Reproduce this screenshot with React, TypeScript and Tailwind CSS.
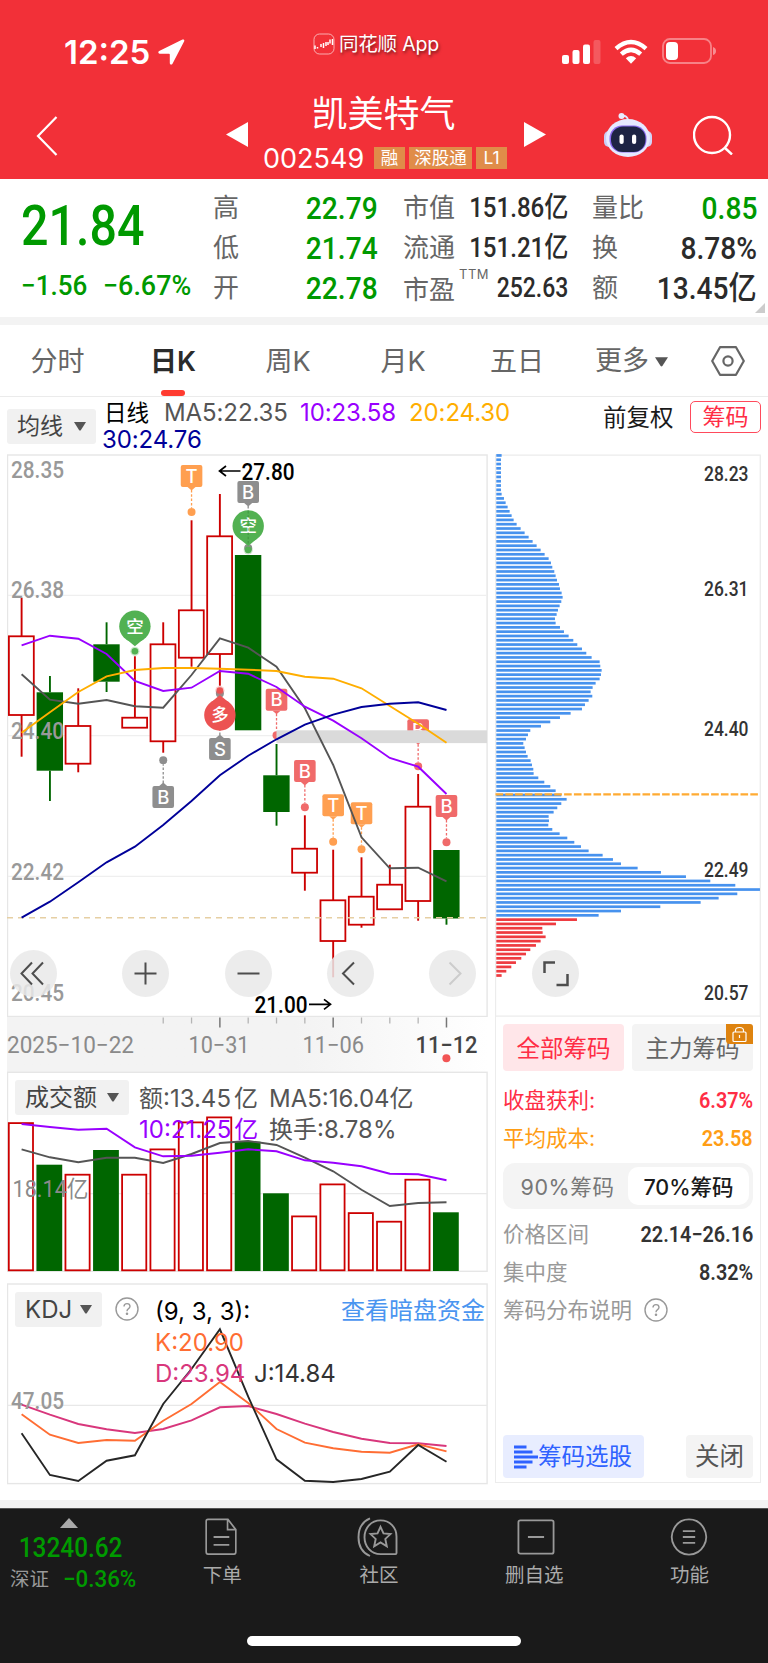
import type { ReactNode } from "react";
import { clsx } from "clsx";

const STEP = 28.325;
const cx = (i: number) => 21.6 + i * STEP;
const line = (ys: number[]) => ys.map((y, i) => `${cx(i).toFixed(1)},${y}`).join(" ");

// [up, high, bodyTop, bodyBottom, low]
const candles: [boolean, number, number, number, number][] = [
  [true, 597.7, 636.3, 715, 756.7],
  [false, 676, 692.3, 770.7, 801],
  [true, 688.3, 726, 763.7, 772.3],
  [false, 622.3, 644.3, 681.7, 692],
  [true, 656.3, 717.7, 727.7, 727.7],
  [true, 622.3, 644.3, 741.3, 752.7],
  [true, 520.3, 610.3, 657.7, 666.7],
  [true, 494, 536.3, 654, 685.7],
  [false, 555, 555, 730.3, 730.3],
  [false, 744, 775.3, 812, 825.7],
  [true, 815.3, 848.7, 872.7, 890.7],
  [true, 849.7, 900.3, 941, 977.3],
  [true, 857.3, 896.7, 924.7, 927.7],
  [true, 864.7, 884.7, 909.3, 909.3],
  [true, 774, 806.7, 901, 920.7],
  [false, 850, 850, 918.5, 924.7],
];

const ma5 = [674.3, 699.7, 703.7, 700, 706.3, 707.7, 675, 638.3, 647.7, 666.7, 708.3, 765, 837.3, 868.3, 867.7, 881.3];
const ma10 = [645.3, 635.7, 638.7, 654, 681, 691, 687.7, 671, 673.7, 687, 706.7, 720.7, 738.3, 758, 766.7, 794];
const ma20 = [732.7, 712.3, 692, 676.3, 670, 668, 668, 668.7, 669.7, 671, 676.7, 678.7, 688.3, 706, 723.7, 742.7];
const ma30 = [917.7, 901.7, 882.3, 862.3, 846.7, 825, 801, 775.3, 755.7, 739.3, 724.7, 714.7, 707, 703.7, 702.3, 710];

const volumes: [boolean, number][] = [
  [true, 1122.7], [false, 1164.7], [true, 1174.3], [false, 1150], [true, 1174.3], [true, 1149], [true, 1122], [true, 1117],
  [false, 1141.7], [false, 1193.3], [true, 1216], [true, 1184], [true, 1212.7], [true, 1221.3], [true, 1179.3], [false, 1212.3],
];
const vol5 = [1149.3, 1157.3, 1162.3, 1157.7, 1157.7, 1163, 1154, 1143, 1141, 1145, 1157.7, 1171.3, 1189.7, 1206, 1203, 1202.3];
const vol10 = [1124, 1127, 1129.7, 1128.7, 1147.3, 1156.3, 1155.7, 1152.7, 1149.3, 1151.3, 1160.3, 1162.7, 1166.3, 1173.7, 1174.3, 1180.3];

const kdjK = [1414.3, 1434.7, 1443, 1440, 1440.7, 1420.7, 1404, 1382, 1403, 1429, 1442.7, 1448.3, 1451.7, 1452.7, 1444.3, 1451.3];
const kdjD = [1404.7, 1414.7, 1424, 1429.3, 1433, 1429, 1420.3, 1407.3, 1406, 1414, 1423.7, 1432, 1438.7, 1443, 1443.3, 1446];
const kdjJ = [1433.3, 1475, 1481, 1460.7, 1455.3, 1404, 1369, 1329.3, 1396.7, 1459.3, 1480.7, 1482, 1479, 1471.7, 1445, 1461.7];

// chip distribution, one length per price level, top to bottom
const chips = [
  16, 14, 14, 14, 14, 14, 14, 14, 14, 16, 23, 28, 34, 40, 46, 52, 61, 73, 85, 97, 109, 121, 133, 145, 157, 164, 168, 174,
  178, 182, 188, 191, 196, 199, 195, 190, 185, 181, 176, 178, 191, 203, 217, 231, 243, 257, 270, 286, 310, 312, 316, 314,
  310, 298, 289, 283, 288, 277, 266, 257, 223, 191, 162, 134, 102, 95, 89, 81, 85, 89, 94, 103, 107, 111, 112, 126, 144,
  162, 178, 195, 211, 195, 183, 172, 157, 158, 156, 168, 190, 213, 234, 254, 277, 319, 350, 374, 424, 494, 569, 642, 717,
  791, 723, 667, 613, 492, 374, 307, 242, 179, 138, 139, 148, 133, 119, 102, 89, 75, 59, 45, 30, 16,
];
const PROFIT_FROM = 108;

const RED = "#cc0000";
const GREEN = "#006600";

function Num({ x, y, w, size = 23, fill = "#999999", weight = 500, children }: {
  x: number; y: number; w: number; size?: number; fill?: string; weight?: number; children: string;
}) {
  return (
    <text x={x} y={y} fontSize={size} fill={fill} fontWeight={weight} textLength={w} lengthAdjust="spacingAndGlyphs" className="font-['Roboto','Noto_Sans_CJK_SC',sans-serif]">
      {children}
    </text>
  );
}

function Flag({ i, y, label, color, dot, up = false }: { i: number; y: number; label: string; color: string; dot: number; up?: boolean }) {
  const x = cx(i);
  const tip = up ? y - 3 : y + 25;
  return (
    <g>
      <line x1={x} x2={x} y1={tip} y2={up ? dot + 4 : dot - 4} stroke={color} strokeWidth="1.3" strokeDasharray="2.5 1.8" />
      <rect x={x - 10.8} y={y} width="21.6" height="22" rx="2" fill={color} />
      <path d={up ? `M${x - 4} ${y}L${x} ${y - 3.5}L${x + 4} ${y}z` : `M${x - 4} ${y + 22}L${x} ${y + 25.5}L${x + 4} ${y + 22}z`} fill={color} />
      <text x={x} y={y + 17.5} fontSize="18.5" fontWeight="500" fill="#fff" textAnchor="middle">{label}</text>
      <circle cx={x} cy={dot} r="4" fill={color} />
    </g>
  );
}

function Balloon({ i, y, label, color, dot, up = false }: { i: number; y: number; label: string; color: string; dot: number; up?: boolean }) {
  const x = cx(i);
  const s = up ? -1 : 1;
  return (
    <g>
      <circle cx={x} cy={dot} r="4.6" fill={color} opacity="0.3" />
      <circle cx={x} cy={dot} r="3.3" fill={color} />
      <circle cx={x} cy={y} r="15.7" fill={color} />
      <path d={`M${x - 9} ${y + s * 12.5}L${x} ${y + s * 20}L${x + 9} ${y + s * 12.5}z`} fill={color} />
      <text x={x} y={y + 6.3} fontSize="17.5" fontWeight="500" fill="#fff" textAnchor="middle">{label}</text>
    </g>
  );
}

function Poly({ ys, color }: { ys: number[]; color: string }) {
  return <polyline points={line(ys)} fill="none" stroke={color} strokeWidth="1.9" />;
}

function CandleChart() {
  return (
    <svg viewBox="7 454 481 563" className="block h-[563px] w-[481px]">
      <rect x="7.5" y="455" width="479.6" height="561.5" fill="#fff" stroke="#e6e6e6" strokeWidth="1.4" />
      {[595.3, 735.7, 876.3].map((y) => (
        <line key={y} x1="8" x2="487" y1={y} y2={y} stroke="#efefef" strokeWidth="1.3" />
      ))}
      {candles.map(([up, high, top, bottom, low], i) => (
        <g key={i} stroke={up ? RED : GREEN} strokeWidth="1.9">
          <line x1={cx(i)} x2={cx(i)} y1={high} y2={top} />
          <line x1={cx(i)} x2={cx(i)} y1={bottom} y2={low} />
          {up ? (
            <rect x={cx(i) - 12.7} y={top} width="24.9" height={bottom - top} fill="#fff" strokeWidth="1.8" />
          ) : (
            <rect x={cx(i) - 13.3} y={top} width="26.4" height={bottom - top} fill={GREEN} stroke="none" />
          )}
        </g>
      ))}
      <Flag i={6} y={465} label="T" color="#ff9f50" dot={512} />
      <Flag i={8} y={481} label="B" color="#8e8e8e" dot={548} />
      <Balloon i={8} y={526} label="空" color="#52b152" dot={550} />
      <line x1={cx(8)} x2={cx(8)} y1="511" y2="545" stroke="#3a8a3a" strokeWidth="1.2" strokeDasharray="2.5 1.8" opacity="0.6" />
      <Balloon i={4} y={626.3} label="空" color="#52b152" dot={651.3} />
      <Flag i={7} y={738} label="S" color="#8e8e8e" dot={693.5} up />
      <Balloon i={7} y={715} label="多" color="#ec5252" dot={690.5} up />
      <Flag i={5} y={786} label="B" color="#8e8e8e" dot={760.3} up />
      <Flag i={9} y={688.7} label="B" color="#f06a6a" dot={735.3} />
      <Flag i={10} y={760} label="B" color="#f06a6a" dot={807.3} />
      <Flag i={11} y={794.3} label="T" color="#ff9f50" dot={841.7} />
      <Flag i={12} y={802.3} label="T" color="#ff9f50" dot={849.3} />
      <Flag i={14} y={719.3} label="B" color="#f06a6a" dot={766.3} />
      <Flag i={15} y={795} label="B" color="#f06a6a" dot={842.3} />
      <rect x="276.5" y="730.3" width="210.5" height="12.8" fill="#dadada" />
      <Num x={11} y={477.8} w={53}>28.35</Num>
      <Num x={11} y={598.3} w={53}>26.38</Num>
      <Num x={11} y={739.2} w={53}>24.40</Num>
      <Num x={11} y={879.8} w={53}>22.42</Num>
      <Num x={11} y={1000.5} w={53}>20.45</Num>
      <line x1="7" x2="487" y1="917.8" y2="917.8" stroke="#e6cfa3" strokeWidth="1.5" strokeDasharray="6 5" />
      <Poly ys={ma5} color="#555555" />
      <Poly ys={ma10} color="#9900ff" />
      <Poly ys={ma20} color="#ffae00" />
      <Poly ys={ma30} color="#000099" />
      <g fill="none" stroke="#000" strokeWidth="1.7">
        <path d="M240.5 471H219.5M226 466L219.5 471L226 476" />
        <path d="M309 1004.3H330.5M324 999.3L330.5 1004.3L324 1009.3" />
      </g>
      <Num x={241.5} y={479.6} w={53} fill="#000">27.80</Num>
      <Num x={254.5} y={1012.6} w={53} fill="#000">21.00</Num>
    </svg>
  );
}

function RoundButton({ children, className }: { children: ReactNode; className?: string }) {
  return (
    <button className={clsx("size-[47px] shrink-0 rounded-full bg-[#e9e9e9]/85", className)}>
      <svg viewBox="0 0 47 47" fill="none" stroke="#4d4d4d" strokeWidth="2" className="size-full">{children}</svg>
    </button>
  );
}

function DateAxis() {
  return (
    <svg viewBox="7 1016 481 55" className="block h-[55px] w-[481px] bg-linear-to-r from-[#f3f3f3] from-60% to-white">
      {[5, 6, 8, 9, 10, 12, 13, 14].map((i) => (
        <line key={i} x1={cx(i)} x2={cx(i)} y1="1016.5" y2="1022.5" stroke="#b5b5b5" strokeWidth="1.3" />
      ))}
      {[7, 11, 15].map((i) => (
        <line key={i} x1={cx(i)} x2={cx(i)} y1="1016.5" y2="1026.5" stroke="#777" strokeWidth="1.5" />
      ))}
      <Num x={7} y={1051.5} w={127} weight={400} fill="#8a8a8a">2025−10−22</Num>
      <Num x={188.500} y={1051.500} w={61} weight={400} fill="#8a8a8a">10−31</Num>
      <Num x={302.500} y={1051.500} w={61.500} weight={400} fill="#8a8a8a">11−06</Num>
      <Num x={415.500} y={1051.500} w={62} fill="#444">11−12</Num>
      <circle cx="446.4" cy="1057.3" r="4" fill="#f25555" />
    </svg>
  );
}

function VolumeChart() {
  return (
    <svg viewBox="7 1071 481 201" className="block h-[201px] w-[481px] [grid-area:1/1]">
      <rect x="7.5" y="1072.3" width="479.6" height="199" fill="#fff" stroke="#e6e6e6" strokeWidth="1.4" />
      <line x1="8" x2="487" y1="1193.7" y2="1193.7" stroke="#e8e8e8" strokeWidth="1.3" />
      {volumes.map(([up, top], i) =>
        up ? (
          <rect key={i} x={cx(i) - 12.8} y={top + 0.4} width="24.2" height={1269.9 - top} fill="#fff" stroke={RED} strokeWidth="1.8" />
        ) : (
          <rect key={i} x={cx(i) - 13.5} y={top} width="25.8" height={1271 - top} fill={GREEN} />
        )
      )}
      <Poly ys={vol5} color="#555555" />
      <Poly ys={vol10} color="#9900ff" />
      <Num x={12.5} y={1197} w={76} weight={400} fill="#8a8a8a">18.14亿</Num>
    </svg>
  );
}

function KdjChart() {
  return (
    <svg viewBox="7 1283 481 202" className="block h-[202px] w-[481px] [grid-area:1/1]">
      <rect x="7.5" y="1284" width="479.6" height="199.6" fill="#fff" stroke="#e6e6e6" strokeWidth="1.4" />
      <line x1="8" x2="487" y1="1405.3" y2="1405.3" stroke="#e8e8e8" strokeWidth="1.3" />
      <Poly ys={kdjD} color="#d8377c" />
      <Poly ys={kdjK} color="#ff6d33" />
      <Poly ys={kdjJ} color="#262626" />
      <Num x={11} y={1408.6} w={53}>47.05</Num>
    </svg>
  );
}

function ChipChart() {
  return (
    <svg viewBox="495 454 266 563" className="block h-[563px] w-[266px]">
      <path d="M495.5 1017V455.2H760.3V1017" fill="none" stroke="#ececec" strokeWidth="1.3" />
      <line x1="496" x2="760" y1="1016.2" y2="1016.2" stroke="#ececec" strokeWidth="1.3" />
      {chips.map((w, k) => (
        <rect key={k} x="496.3" y={454.1 + k * 4.298} width={w / 3} height="2.7" fill={k < PROFIT_FROM ? "#4792ee" : "#ee3b40"} />
      ))}
      <line x1="495.5" x2="759" y1="794.4" y2="794.4" stroke="#ffab33" strokeWidth="2.4" strokeDasharray="7.6 2.2" />
      <Num x={704} y={480.5} w={44.5} size={20} fill="#333">28.23</Num>
      <Num x={704} y={595.5} w={44.5} size={20} fill="#333">26.31</Num>
      <Num x={704} y={736.2} w={44.5} size={20} fill="#333">24.40</Num>
      <Num x={704} y={876.6} w={44.5} size={20} fill="#333">22.49</Num>
      <Num x={704} y={999.5} w={44.5} size={20} fill="#333">20.57</Num>
    </svg>
  );
}

function Caret({ className }: { className?: string }) {
  return (
    <svg viewBox="0 0 12 9" className={clsx("h-[9px] w-3 fill-[#555]", className)}>
      <path d="M0 0h12L6.8 8.2q-.8.8-1.6 0z" />
    </svg>
  );
}

function Dropdown({ label, className }: { label: string; className?: string }) {
  return (
    <button className={clsx("flex h-[35px] items-center justify-between rounded-[3px] bg-[#f1f1f1] pr-[10px] pl-[10px] text-[#444]", className)}>
      <span>{label}</span>
      <Caret />
    </button>
  );
}

function Help() {
  return (
    <svg viewBox="0 0 24 24" fill="none" stroke="#999" strokeWidth="1.4" className="size-6 shrink-0">
      <circle cx="12" cy="12" r="11" />
      <path d="M9 9.6q.1-3 3-3t3 2.7q0 1.5-1.700 2.500-1.300.8-1.300 2.500" />
      <circle cx="12" cy="16.8" r=".6" fill="#999" />
    </svg>
  );
}

function StatusBar() {
  return (
    <div className="flex h-[90px] items-start">
      <div className="flex w-[313px] items-center pt-8 pl-[64px]">
        <span className="w-[94px] text-[33px] leading-[40px] font-semibold">12:25</span>
        <svg viewBox="0 0 27 26" className="h-[26px] w-[27px]" fill="#fff">
          <path d="M24.5.6 1.2 12C-.2 12.700.2 14.700 1.700 14.700h9.300c.5 0 .8.3.8.8v8.500c0 1.700 2 2.100 2.700.7L26.200 2.300C26.700 1 25.700.1 24.500.6z" />
        </svg>
      </div>
      <div className="flex w-[249px] items-center gap-1 pt-[29px]">
        <svg viewBox="0 0 22 22" className="size-[22px]" fill="none" stroke="#fff">
          <rect x="1" y="1" width="20" height="20" rx="5.5" strokeOpacity=".6" />
          <path d="M2 12.5v3.5M4.500 14v1.500M8 11v3M10.500 10v5M13 9v4M15 12V9M17 6.500v4M19.500 6v6" strokeWidth="1.5" />
        </svg>
        <span className="text-[19.5px] leading-[30px] tracking-[-0.2px] [text-shadow:1px_2px_3px_rgba(0,0,0,.5)]">同花顺 App</span>
      </div>
      <div className="flex items-center pt-[38px]">
        <svg viewBox="0 0 39 25" className="h-[25px] w-[39px]" fill="#fff">
          <rect y="16" width="7" height="9" rx="2" />
          <rect x="10.5" y="11" width="7" height="14" rx="2" />
          <rect x="21" y="5.5" width="7" height="19.5" rx="2" />
          <rect x="31.5" y="1" width="7" height="24" rx="2" opacity=".2" />
        </svg>
        <svg viewBox="0 0 34 25" className="ml-[13px] h-[25px] w-[34px]" fill="none" stroke="#fff" strokeWidth="4.4">
          <path d="M2 9.6Q17-3.6 32 9.600" />
          <path d="M7.3 15.2Q17 6.6 26.7 15.2" />
          <path d="M17 24.8 11.8 19.2Q17 14.8 22.2 19.2z" fill="#fff" stroke="none" />
        </svg>
        <svg viewBox="0 0 55 26" className="ml-[14px] h-[26px] w-[55px]">
          <rect x="1" y="1" width="48" height="24" rx="7" fill="none" stroke="#fff" strokeOpacity=".4" strokeWidth="1.8" />
          <rect x="4" y="4" width="12" height="18" rx="4" fill="#fff" />
          <path d="M51 9q3 1 3 4t-3 4z" fill="#fff" fillOpacity=".45" />
        </svg>
      </div>
    </div>
  );
}

function Robot() {
  return (
    <svg viewBox="0 0 48 46" className="h-[46px] w-12">
      <path d="M17 4q7-1 7 5" fill="none" stroke="#dfe6ff" strokeWidth="2" />
      <circle cx="17.5" cy="4" r="3" fill="#e9edff" />
      <rect x="0" y="19" width="10" height="16" rx="5" fill="#c9ccf5" />
      <rect x="38" y="19" width="10" height="16" rx="5" fill="#d3d3f8" />
      <ellipse cx="24" cy="26" rx="22" ry="19" fill="#e6e9ff" />
      <rect x="5.5" y="13.5" width="37" height="27" rx="12.5" fill="#8a6bf0" />
      <rect x="7" y="14.5" width="34.5" height="25.5" rx="12" fill="#1d2444" />
      <rect x="15.5" y="22.5" width="4.2" height="9.5" rx="2.1" fill="#fff" />
      <rect x="28" y="22.5" width="4.2" height="9.5" rx="2.1" fill="#fff" />
    </svg>
  );
}

function TitleBar() {
  const tag = "flex h-[22px] items-center justify-center bg-[#e08c49] text-[17.5px]";
  return (
    <div className="flex h-[89px]">
      <div className="w-[226px] pt-[26px] pl-9">
        <svg viewBox="0 0 22 40" className="h-10 w-[22px]" fill="none" stroke="#fff" strokeWidth="2.2">
          <path d="M20.5 1 2 20l18.5 19" />
        </svg>
      </div>
      <svg viewBox="0 0 22 25" className="mt-8 h-[25px] w-[22px]" fill="#fff"><path d="M22 0v25L0 12.5z" /></svg>
      <div className="flex w-[276px] flex-col items-center">
        <div className="pr-[5px] text-[36px] leading-[49px]">凯美特气</div>
        <div className="flex h-[38px] w-[244px] items-center gap-1">
          <span className="-ml-[1px] w-[107px] text-[27px] leading-none">002549</span>
          <span className={clsx(tag, "w-[31px]")}>融</span>
          <span className={clsx(tag, "w-[63px]")}>深股通</span>
          <span className={clsx(tag, "w-[31px]")}>L1</span>
        </div>
      </div>
      <svg viewBox="0 0 22 25" className="mt-8 h-[25px] w-[22px]" fill="#fff"><path d="M0 0v25l22-12.5z" /></svg>
      <div className="flex pt-[22px] pl-[58px]"><Robot /></div>
      <svg viewBox="0 0 40 40" className="mt-[25px] ml-[41px] size-10" fill="none" stroke="#fff" strokeWidth="2.4">
        <circle cx="19" cy="20" r="18" />
        <path d="M32 33l7 6.5" />
      </svg>
    </div>
  );
}

const din = "font-['Roboto','Noto_Sans_CJK_SC',sans-serif]";

function Stat({ label, value, valueClass }: { label: ReactNode; value: string; valueClass: string }) {
  return (
    <div className="flex h-10 items-center">
      <span className="w-0 text-[26px] leading-none whitespace-nowrap text-[#666]">{label}</span>
      <span className={clsx(din, "ml-auto origin-right leading-none font-medium whitespace-nowrap", valueClass)}>{value}</span>
    </div>
  );
}

function Quote() {
  const big = "scale-x-[.88] text-[32px]";
  const mid = "scale-x-[.86] text-[28px] text-[#2b2b2b]";
  return (
    <section className="relative flex h-[138px] pt-[9px]">
      <div className={clsx(din, "w-[213px] pl-[21px] text-[#009900]")}>
        <div className="h-[75px] origin-left scale-x-[.88] pt-[9px] text-[55px] leading-[58px] font-medium">21.84</div>
        <div className="flex h-[46px] text-[28px] leading-[46px] font-medium">
          <span className="w-[82px] origin-left scale-x-[.93]">−1.56</span>
          <span className="origin-left scale-x-[.96]">−6.67%</span>
        </div>
      </div>
      <div className="w-[165px]">
        <Stat label="高" value="22.79" valueClass={clsx(big, "text-[#009900]")} />
        <Stat label="低" value="21.74" valueClass={clsx(big, "text-[#009900]")} />
        <Stat label="开" value="22.78" valueClass={clsx(big, "text-[#009900]")} />
      </div>
      <div className="ml-[25px] w-[165px]">
        <Stat label="市值" value="151.86亿" valueClass={mid} />
        <Stat label="流通" value="151.21亿" valueClass={mid} />
        <Stat
          label={
            <span className="flex pt-[3px]">
              市盈<span className="-mt-[9px] ml-1 text-[13px] leading-none tracking-[0.5px]">TTM</span>
            </span>
          }
          value="252.63"
          valueClass="scale-x-[.82] text-[28px] text-[#2b2b2b]"
        />
      </div>
      <div className="ml-[24px] w-[165px]">
        <Stat label="量比" value="0.85" valueClass={clsx(big, "text-[#009900]")} />
        <Stat label="换" value="8.78%" valueClass={clsx(big, "text-[#2b2b2b]")} />
        <Stat label="额" value="13.45亿" valueClass={clsx(big, "text-[#2b2b2b]")} />
      </div>
      <svg viewBox="0 0 10 10" className="absolute right-[3px] bottom-1 size-[10px] fill-[#ccc]"><path d="M10 0v10H0z" /></svg>
    </section>
  );
}

const tabs = [
  { label: "分时", width: "w-[115px]" },
  { label: "日K", width: "w-[116px]", active: true },
  { label: "周K", width: "w-[114px]" },
  { label: "月K", width: "w-[116px]" },
  { label: "五日", width: "w-[112px]" },
];

function Tabs() {
  return (
    <nav className="flex h-[72px] items-center border-b-[1.5px] border-[#ebebeb] text-[27px] text-[#666]">
      {tabs.map((t) => (
        <div key={t.label} className={clsx("flex h-full flex-col items-center", t.width, t.active && "font-semibold text-[#2b2b2b]")}>
          <span className="h-[65px] leading-[74px]">{t.label}</span>
          {t.active && <span className="h-[6px] w-6 rounded-full bg-[#ff3b30]" />}
        </div>
      ))}
      <div className="ml-[22px] flex w-[116px] items-center gap-1.5 pt-[2px]">
        更多
        <Caret className="h-[10px] w-[13px]" />
      </div>
      <svg viewBox="0 0 34 30" className="h-[30px] w-[34px]" fill="none" stroke="#666" strokeWidth="2.2">
        <path d="M9 1.2h16L32.800 15 25 28.800H9L1.200 15z" strokeLinejoin="round" />
        <circle cx="17" cy="15" r="4.6" />
      </svg>
    </nav>
  );
}

function Averages() {
  return (
    <div className="flex h-[57px] pl-[7px] text-[24px] leading-[27px]">
      <Dropdown label="均线" className="mt-[12px] w-[89px] text-[23px]" />
      <div className="ml-2 w-[436px] pt-[2px] tracking-[-0.1px]">
        <div className="flex whitespace-nowrap">
          <span className="w-[60px] text-[22.5px] text-black">日线</span>
          <span className="w-[136px] text-[#555]">MA5:22.35</span>
          <span className="w-[109px] text-[#9900ff]">10:23.58</span>
          <span className="text-[#ffae00]">20:24.30</span>
        </div>
        <div className="-ml-[2px] text-[#000099]">30:24.76</div>
      </div>
      <span className="mt-[7px] ml-[63px] w-[87px] text-[23.5px] text-[#1a1a1a]">前复权</span>
      <span className="mt-[4px] flex h-8 w-[71px] items-center justify-center rounded-[5px] border border-[#ff4a5c] text-[23px] text-[#ff2d45]">筹码</span>
    </div>
  );
}

function ChipPanel() {
  const value = clsx(din, "origin-right scale-x-[.9] text-[22px] font-semibold");
  return (
    <aside className="flex h-[1029px] w-[266px] flex-col">
      <div className="relative">
        <ChipChart />
        <RoundButton className="absolute bottom-5 left-[37px]">
          <path d="M12.5 23V12.5H23M35.5 24v11H24.5" strokeWidth="2.5" />
        </RoundButton>
      </div>
      <div className="flex grow flex-col border-x border-b border-[#ececec] px-[7px] pt-[7px] pb-1">
        <div className="flex gap-2">
          <button className="h-[47px] w-[121px] rounded bg-[#ffe6e9] pt-[2px] text-[23.5px] text-[#ff2d45]">全部筹码</button>
          <button className="relative h-[47px] w-[121px] rounded bg-[#f4f4f4] pt-[2px] text-[23.5px] text-[#666]">
            主力筹码
            <svg viewBox="0 0 27 20" className="absolute top-0 right-0 h-5 w-[27px]">
              <path d="M0 0h24q3 0 3 3v17H4q-4 0-4-4z" fill="#de830f" />
              <rect x="7" y="8" width="13" height="9.5" rx="1" fill="none" stroke="#fff" strokeWidth="1.2" />
              <path d="M9.5 8V6.5q0-3 4-3t4 3V8M13.5 11v3" fill="none" stroke="#fff" strokeWidth="1.2" />
            </svg>
          </button>
        </div>
        <div className="mt-[10px] flex h-[38px] items-center justify-between text-[21.5px] text-[#ff2d45]">
          收盘获利:<span className={value}>6.37%</span>
        </div>
        <div className="flex h-[38px] items-center justify-between text-[21.5px] text-[#ff9d14]">
          平均成本:<span className={value}>23.58</span>
        </div>
        <div className="mt-[6px] flex h-[46px] shrink-0 rounded-xl bg-[#f4f4f4] p-1 text-[21.5px] leading-[40px]">
          <span className="w-[121px] text-center tracking-[0.6px] text-[#777]">90%筹码</span>
          <span className="w-[121px] rounded-[10px] bg-white text-center font-medium text-[#1a1a1a]">70%筹码</span>
        </div>
        <div className="mt-[6px] flex h-[38px] items-center justify-between text-[21.5px] text-[#999]">
          价格区间<span className={clsx(value, "text-[#333]")}>22.14−26.16</span>
        </div>
        <div className="flex h-[38px] items-center justify-between text-[21.5px] text-[#999]">
          集中度<span className={clsx(value, "text-[#333]")}>8.32%</span>
        </div>
        <div className="flex h-[38px] items-center gap-3 text-[21.5px] text-[#999]">
          筹码分布说明
          <Help />
        </div>
        <div className="mt-auto flex justify-between">
          <button className="flex h-[43px] w-[141px] items-center rounded bg-[#e8edff] pl-[11px] text-[23.5px] text-[#2f62ff]">
            <svg viewBox="0 0 24 24" className="h-6 w-6 shrink-0" stroke="#2f62ff" strokeWidth="3">
              <path d="M0 2h12.5M0 7h18.5M0 12h24M0 17h18.5M0 22h12.5" />
            </svg>
            筹码选股
          </button>
          <button className="h-[43px] w-[67px] rounded bg-[#f4f4f4] text-[24.5px] text-[#555]">关闭</button>
        </div>
      </div>
    </aside>
  );
}

const actions = [
  {
    label: "下单",
    width: "w-[157px]",
    icon: <path d="M4.5 2.5h23L36.5 13v23q0 2-2 2h-30q-2 0-2-2v-31.5q0-2 2-2zM27 2.5V13h9.500M11 20.500h18M11 28.500h18" />,
    box: "-ml-[3px] w-[34px]",
    view: "0 0 39 41",
  },
  {
    label: "社区",
    width: "w-[157px]",
    icon: (
      <>
        <path d="M23.5 3.5C33 3.5 39.5 11 39.5 20v17q0 1-1 1H23.5C14 38 7.5 30 7.5 20.7S14 3.5 23.5 3.5z" />
        <path d="M13 1.5C5 5 1.5 12.5 1.5 20.7S5 36.5 13 40" />
        <path d="M23.5 10l3 6.8 7 .7-5.2 5 1.5 7.5-6.3-3.9-6.3 3.900 1.500-7.500-5.200-5 7-.7z" />
      </>
    ),
    box: "-ml-[3px] w-[41px]",
    view: "0 0 41 41",
  },
  {
    label: "删自选",
    width: "w-[154px]",
    icon: <path d="M3.5 3.5h33q2 0 2 2v30q0 2-2 2h-33q-2 0-2-2v-30q0-2 2-2zM11.500 20.500h17" />,
    box: "ml-[3px] w-[38px]",
    view: "0 0 40 41",
  },
  {
    label: "功能",
    width: "w-[157px]",
    icon: <path d="M20 2.5a18 18 0 1 1-.01 0zM13.500 14.500h13M13.500 20.500h13M13.500 26.500h13" />,
    box: "-ml-[1px] w-[38px]",
    view: "0 0 40 41",
  },
];

function BottomBar() {
  return (
    <footer className="flex h-[155px] flex-col items-center border-t-[1.5px] border-[#555] bg-[#1a1a1a]">
      <div className="flex h-[127px] w-full">
        <div className="flex w-[144px] flex-col items-center pt-[9px]">
          <svg viewBox="0 0 18 10" className="h-[10px] w-[18px] -translate-x-[3px] fill-[#aaa]"><path d="M9 0l9 10H0z" /></svg>
          <span className={clsx(din, "mt-[3px] mr-[3px] scale-x-[.87] text-[28px] leading-[34px] font-medium text-[#009a00]")}>13240.62</span>
          <div className="flex w-full items-center pl-[10px] text-[19.5px] leading-7 text-[#999]">
            <span className="w-[53px]">深证</span>
            <span className={clsx(din, "origin-left scale-x-[.95] text-[23.5px] font-medium text-[#009a00]")}>−0.36%</span>
          </div>
        </div>
        {actions.map((a) => (
          <div key={a.label} className={clsx("flex flex-col items-center pt-2 text-[19.5px] text-[#aaa]", a.width)}>
            <svg viewBox={a.view} fill="none" stroke="#999" strokeWidth="1.9" preserveAspectRatio="none" className={clsx("h-10", a.box)}>
              {a.icon}
            </svg>
            <span className="mt-1 leading-7">{a.label}</span>
          </div>
        ))}
      </div>
      <div className="h-[10px] w-[274px] rounded-full bg-white" />
    </footer>
  );
}

export default function App() {
  return (
    <div className="w-[768px] overflow-hidden bg-white font-['Inter','Noto_Sans_CJK_SC',sans-serif]">
      <header className="bg-[#f23038] text-white">
        <StatusBar />
        <TitleBar />
      </header>
      <Quote />
      <div className="h-2 bg-[#f3f3f3]" />
      <Tabs />
      <Averages />
      <main className="flex h-[1046px] justify-between pr-[7px] pl-[7px]">
        <div className="w-[481px]">
          <div className="relative">
            <CandleChart />
            <div className="absolute bottom-5 left-[3px] flex">
              <RoundButton><path d="M22 12.5 11.5 23.5 22 34.5M33 12.5 22.5 23.5 33 34.5" /></RoundButton>
              <RoundButton className="ml-[65px]"><path d="M23.5 12.5v22M12.5 23.5h22" /></RoundButton>
              <RoundButton className="ml-[56px]"><path d="M12.5 23.5h22" /></RoundButton>
              <RoundButton className="ml-[55px]"><path d="M27 12.5 16 23.5l11 11" /></RoundButton>
              <RoundButton className="ml-[55px]"><path d="M20.5 12.5l11 11-11 11" stroke="#ccc" /></RoundButton>
            </div>
          </div>
          <DateAxis />
          <div className="-mt-px grid">
            <VolumeChart />
            <div className="flex items-start pt-[9px] pl-2 text-[24px] leading-[31px] text-[#555] [grid-area:1/1]">
              <Dropdown label="成交额" className="w-[114px]" />
              <div className="mt-[3px] ml-[10px] grid grid-cols-[130px_auto] whitespace-nowrap">
                <span>额:13.45<span className="ml-[3px]">亿</span></span>
                <span>MA5:16.04亿</span>
                <span className="text-[#9900ff]">10:21.25<span className="ml-[3px]">亿</span></span>
                <span>换手:8.78%</span>
              </div>
            </div>
          </div>
          <div className="mt-[11px] grid">
            <KdjChart />
            <div className="flex items-start pt-[9px] pl-2 text-[24px] leading-[31px] [grid-area:1/1]">
              <Dropdown label="KDJ" className="w-[87px]" />
              <div className="mt-[5px] ml-[13px]"><Help /></div>
              <div className="mt-[4px] ml-[16px] grid grid-cols-[99px_auto]">
                <span className="col-span-2 text-black">(9, 3, 3):</span>
                <span className="col-span-2 text-[#ff6d33]">K:20.90</span>
                <span className="text-[#d8377c]">D:23.94</span>
                <span className="text-[#333]">J:14.84</span>
              </div>
              <span className="mt-[3px] ml-auto pr-[3px] text-[#4a95f0]">查看暗盘资金</span>
            </div>
          </div>
        </div>
        <ChipPanel />
      </main>
      <div className="h-2 bg-[#f3f3f3]" />
      <BottomBar />
    </div>
  );
}
